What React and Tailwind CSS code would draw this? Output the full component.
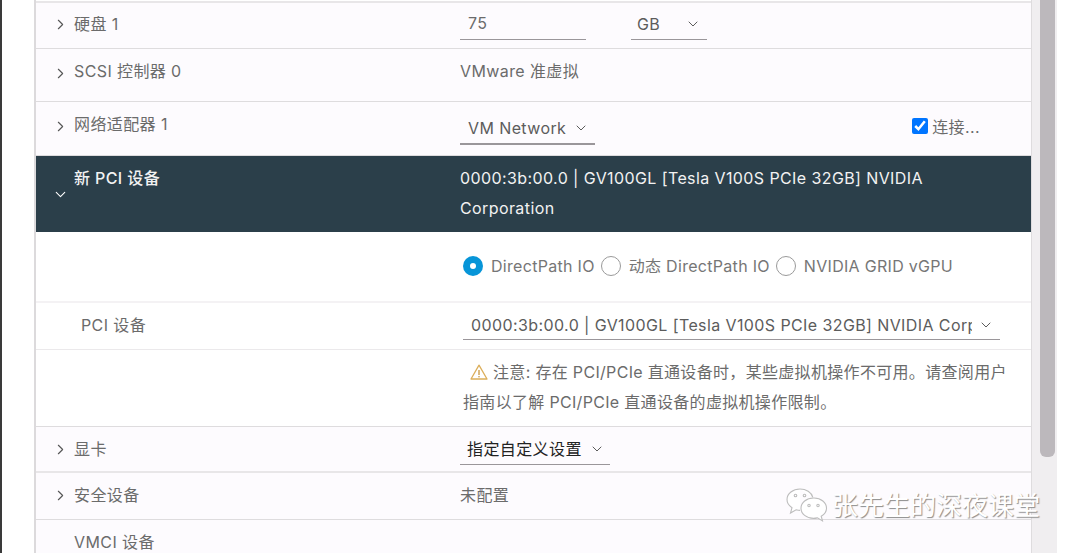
import { ChevronRight, ChevronDown } from 'lucide-react';

const Select = ({ text, className = '', textClass = 'text-[#5c5c5c]' }) => (
  <div className={`flex items-center justify-between border-b border-[#9a969a] ${className}`}>
    <span className={`block overflow-hidden whitespace-nowrap ${textClass}`}>{text}</span>
    <ChevronDown size={16} strokeWidth={1.5} className="shrink-0 text-[#5c5c5c]" />
  </div>
);

const Row = ({ label, open, chevronClass = 'mt-[7px]', className = '', labelClass = '', children }) => (
  <div className={`flex shrink-0 items-start pl-[18px] ${className}`}>
    <div className={`w-[20px] shrink-0 ${chevronClass}`}>
      {open === false && <ChevronRight size={17} strokeWidth={1.6} className="-ml-[2px] text-[#565656]" />}
      {open === true && <ChevronDown size={17} strokeWidth={1.5} className="-ml-[2px] text-white" />}
    </div>
    <div className={`w-[386px] shrink-0 ${labelClass}`}>{label}</div>
    <div className="min-w-0 flex-1">{children}</div>
  </div>
);

const Radio = ({ checked, label }) => (
  <div className="flex items-center gap-[8px]">
    {checked ? (
      <span className="flex h-[20px] w-[20px] shrink-0 items-center justify-center rounded-full bg-[#0795d8]">
        <span className="h-[6px] w-[6px] rounded-full bg-white" />
      </span>
    ) : (
      <span className="h-[20px] w-[20px] shrink-0 rounded-full border border-[#9a9a9a] bg-white" />
    )}
    <span className="whitespace-nowrap">{label}</span>
  </div>
);

const WeChat = () => (
  <svg width="42" height="36" viewBox="0 0 42 36" fill="none" stroke="#bdbdbd" strokeWidth="1.100">
    <path d="M14 1C7 1 1 5.600 1 11.500c0 3.400 2 6.200 5 8.200L4.500 25l5.600-3.200c1.400.4 2.600.6 4 .6" fill="#fff" />
    <path d="M14 1c6 0 11.500 3.400 12.800 8.300" fill="#fff" />
    <circle cx="9.500" cy="7.500" r="1.300" />
    <circle cx="18.500" cy="7.500" r="1.300" />
    <path d="M27.500 10C20.500 10 15 14.600 15 20.200s5.500 10.200 12.500 10.200c1.400 0 2.600-.2 3.900-.5l5.100 3-1.300-4.700c3.300-1.900 5.300-4.700 5.300-8 0-5.600-5.500-10.200-12.500-10.200z" fill="#fff" />
    <circle cx="23" cy="17.500" r="1.200" />
    <circle cx="32" cy="17.500" r="1.200" />
  </svg>
);

export default function App() {
  return (
    <div className="relative flex h-[553px] w-[1080px] overflow-hidden bg-white font-['Inter','Noto_Sans_CJK_SC',sans-serif] text-[16px] leading-[30px] tracking-[0.4px] text-[#6b6b6b]">
      {/* left gutter */}
      <div className="h-full w-[36px] shrink-0 border-r-2 border-[#dcdadc]">
        <div className="h-full w-[2px] bg-[#3a3a3a]" />
      </div>

      {/* device table */}
      <div className="flex h-full w-[996px] shrink-0 flex-col border-r border-[#dedcde] bg-[#fdfbfe]">
        <div className="h-[3px] shrink-0 border-b-2 border-[#e8e6e8] bg-white" />

        <Row label="硬盘 1" open={false} className="h-[46px] border-b border-[#dedcde] pt-[6px]">
          <div className="flex">
            <div className="h-[31px] w-[126px] border-b border-[#9a969a] pl-[8px] pt-[1px] leading-[26px]">75</div>
            <Select text="GB" className="ml-[45px] h-[31px] w-[76px] pl-[6px] pr-[6px]" />
          </div>
        </Row>

        <Row label="SCSI 控制器 0" open={false} chevronClass="mt-[9px]" className="h-[53px] border-b border-[#dedcde] pt-[7px]">
          VMware 准虚拟
        </Row>

        <Row label="网络适配器 1" open={false} chevronClass="mt-[9px]" className="h-[54px] border-b border-[#dedcde] pt-[7px]">
          <div className="flex justify-between pr-[51px]">
            <Select text="VM Network" className="mt-[4px] h-[32px] w-[135px] border-b-2 pl-[8px] pr-[6px] text-[#4a4a4a]" />
            <div className="flex items-center gap-[4px]">
              <input type="checkbox" checked readOnly className="-mt-[3px] h-[16px] w-[16px]" />
              <span className="whitespace-nowrap">连接...</span>
            </div>
          </div>
        </Row>

        <Row
          label="新 PCI 设备"
          open={true}
          chevronClass="mt-[23px]"
          labelClass="font-medium"
          className="h-[76px] bg-[#2b3f4a] pt-[7px] text-[#f2f2f2]"
        >
          <div className="w-[500px]">0000:3b:00.0 | GV100GL [Tesla V100S PCIe 32GB] NVIDIA Corporation</div>
        </Row>

        <div className="flex h-[71px] shrink-0 items-start gap-[6px] border-b-2 border-[#f4f2f4] bg-white pl-[427px] pt-[19px] tracking-[0.3px] text-[#767676]">
          <Radio checked label="DirectPath IO" />
          <Radio label="动态 DirectPath IO" />
          <Radio label="NVIDIA GRID vGPU" />
        </div>

        <div className="flex h-[47px] shrink-0 items-start border-b border-[#ebe9eb] bg-white pt-[7px]">
          <div className="w-[427px] shrink-0 pl-[45px]">PCI 设备</div>
          <Select
            text="0000:3b:00.0 | GV100GL [Tesla V100S PCIe 32GB] NVIDIA Corporation"
            className="h-[30px] w-[537px] pl-[8px] pr-[6px]"
            textClass="w-[501px] text-[#5c5c5c]"
          />
        </div>

        <div className="h-[77px] shrink-0 border-b border-[#dedcde] bg-white pl-[427px] pt-[7px] tracking-[0.32px]">
          <div className="flex items-center whitespace-nowrap pl-[7px]">
            <svg width="18" height="16" viewBox="0 0 18 16" fill="none" className="mr-[5px] shrink-0">
              <path d="M9 1.200 1 15h16L9 1.200z" stroke="#dcae5a" strokeWidth="1.300" strokeLinejoin="round" />
              <path d="M9 6v5" stroke="#c9973f" strokeWidth="1.300" />
              <circle cx="9" cy="12.800" r="0.800" fill="#c9973f" />
            </svg>
            注意: 存在 PCI/PCIe 直通设备时，某些虚拟机操作不可用。请查阅用户
          </div>
          <div className="whitespace-nowrap">指南以了解 PCI/PCIe 直通设备的虚拟机操作限制。</div>
        </div>

        <Row label="显卡" open={false} className="h-[46px] border-b-2 border-[#e8e6e8] pt-[7px]">
          <Select text="指定自定义设置" className="h-[31px] w-[150px] pl-[7px] pr-[5px]" textClass="text-[#222222]" />
        </Row>

        <Row label="安全设备" open={false} className="h-[47px] border-b border-[#dedcde] pt-[7px]">
          未配置
        </Row>

        <Row label="VMCI 设备" className="h-[33px] pt-[7px]" />
      </div>

      {/* scrollbar */}
      <div className="h-full w-[25px] shrink-0 bg-[#f0eef0] pl-[8px]">
        <div className="h-[457px] w-[15px] rounded-b-[6px] bg-[#bcb8bc]" />
      </div>

      {/* watermark */}
      <div className="absolute left-[786px] top-[488px] flex items-center gap-[4px]">
        <WeChat />
        <span className="whitespace-nowrap text-[26px] leading-[36px] tracking-normal text-white [text-shadow:1px_1px_1px_#8c8c8c]">张先生的深夜课堂</span>
      </div>
    </div>
  );
}
